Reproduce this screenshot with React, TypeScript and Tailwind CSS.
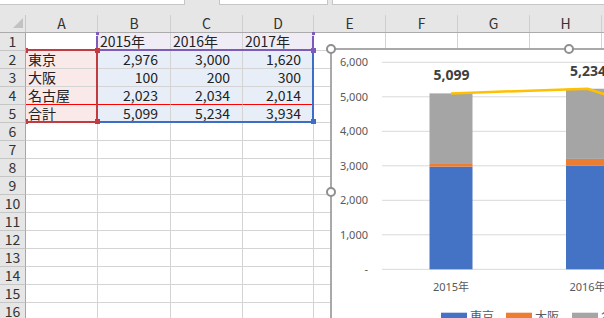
import React from "react";

const cols = [
  { l: "A", w: "w-[72px]" },
  { l: "B", w: "w-[73px]" },
  { l: "C", w: "w-[72px]" },
  { l: "D", w: "w-[71px]" },
  { l: "E", w: "w-[72px]" },
  { l: "F", w: "w-[72px]" },
  { l: "G", w: "w-[72px]" },
  { l: "H", w: "w-[72px]" },
  { l: "I", w: "w-[72px]" },
];

const data: string[][] = [
  ["", "2015年", "2016年", "2017年"],
  ["東京", "2,976", "3,000", "1,620"],
  ["大阪", "100", "200", "300"],
  ["名古屋", "2,023", "2,034", "2,014"],
  ["合計", "5,099", "5,234", "3,934"],
];

const rows = Array.from({ length: 16 }, (_, i) => i + 1);

function cellClass(r: number, c: number): string {
  let bg = "bg-white";
  if (r === 1 && c >= 1 && c <= 3) bg = "bg-[#efecf6]";
  if (r >= 2 && r <= 5 && c === 0) bg = "bg-[#fae9e9]";
  if (r >= 2 && r <= 5 && c >= 1 && c <= 3) bg = "bg-[#e7eef8]";
  const bb = r === 4 && c <= 3 ? "border-b-[#ff0000]" : "border-b-[#d4d4d4]";
  return `${bg} ${bb}`;
}

function Chart() {
  const y0 = 219.3;
  const k = 0.0345;
  const grid = [0, 1000, 2000, 3000, 4000, 5000, 6000];
  const labels = ["-", "1,000", "2,000", "3,000", "4,000", "5,000", "6,000"];
  const bars = [
    { x: 97.5, v: [2976, 100, 2023] },
    { x: 234, v: [3000, 200, 2034] },
  ];
  const colors = ["#4472c4", "#ed7d31", "#a5a5a5"];
  const cx = [119, 255.5, 392.5];
  const totals = [5099, 5234, 3934];
  return (
    <svg width="300" height="300" className="absolute left-0 top-0 overflow-visible">
      {grid.map((g, i) => (
        <g key={g}>
          <line x1={50} x2={300} y1={y0 - g * k} y2={y0 - g * k} stroke="#d9d9d9" strokeWidth={1} />
          <text
            x={36}
            y={y0 - g * k + 4}
            textAnchor="end"
            fontSize={11}
            fill="#595959"
            fontFamily="'Noto Sans', sans-serif"
          >
            {labels[i]}
          </text>
        </g>
      ))}
      {bars.map((b, bi) => {
        let acc = 0;
        return (
          <g key={bi}>
            {b.v.map((v, i) => {
              const yTop = y0 - (acc + v) * k;
              const h = v * k;
              acc += v;
              return <rect key={i} x={b.x} y={yTop} width={43} height={h} fill={colors[i]} />;
            })}
          </g>
        );
      })}
      <polyline
        points={totals.map((t, i) => `${cx[i]},${y0 - t * k}`).join(" ")}
        fill="none"
        stroke="#ffc000"
        strokeWidth={2.5}
        strokeLinejoin="round"
      />
      <text x={119.5} y={30} textAnchor="middle" fontSize={14} fontWeight={700} fill="#404040" fontFamily="'Noto Sans', sans-serif">
        5,099
      </text>
      <text x={256} y={25.5} textAnchor="middle" fontSize={14} fontWeight={700} fill="#404040" fontFamily="'Noto Sans', sans-serif">
        5,234
      </text>
      <text x={119} y={241} textAnchor="middle" fontSize={11} fill="#595959" fontFamily="'Noto Sans', 'Noto Sans CJK JP', sans-serif">
        2015年
      </text>
      <text x={255.5} y={241} textAnchor="middle" fontSize={11} fill="#595959" fontFamily="'Noto Sans', 'Noto Sans CJK JP', sans-serif">
        2016年
      </text>
      <rect x={109} y={262.7} width={26} height={8} fill="#4472c4" />
      <text x={138} y={271} fontSize={12} fill="#595959" fontFamily="'Noto Sans CJK JP', sans-serif">
        東京
      </text>
      <rect x={174} y={262.7} width={26} height={8} fill="#ed7d31" />
      <text x={203} y={271} fontSize={12} fill="#595959" fontFamily="'Noto Sans CJK JP', sans-serif">
        大阪
      </text>
      <rect x={240} y={262.7} width={26} height={8} fill="#a5a5a5" />
      <text x={269} y={271} fontSize={12} fill="#595959" fontFamily="'Noto Sans CJK JP', sans-serif">
        名古屋
      </text>
    </svg>
  );
}

export default function App() {
  return (
    <div
      className="relative w-[604px] h-[318px] overflow-hidden bg-white text-[14px] text-[#222]"
      style={{ fontFamily: "'Noto Sans CJK JP', 'Liberation Sans', sans-serif" }}
    >
      {/* top strip */}
      <div className="flex h-[5px] bg-[#e6e6e6]">
        <div className="w-[185px] bg-white border-b border-r border-[#c6c6c6]" />
        <div className="w-[34px]" />
        <div className="w-[109px] bg-white border-b border-x border-[#c6c6c6]" />
        <div className="w-[4px]" />
        <div className="flex-1 bg-white border-b border-l border-[#c6c6c6]" />
      </div>
      {/* column header */}
      <div className="flex h-[28px] bg-[#e6e6e6] border-b border-[#ababab]">
        <div className="relative w-[26px] shrink-0 border-r border-[#c8c8c8] mt-[10px]">
          <div className="absolute left-[13px] top-[3px] w-0 h-0 border-l-[10px] border-l-transparent border-b-[10px] border-b-[#c2c2c2]" />
        </div>
        {cols.map((c) => (
          <div
            key={c.l}
            className={`${c.w} shrink-0 mt-[10px] border-r border-[#cfcfcf] flex items-center justify-center leading-[17px] text-[#333]`}
          >
            {c.l}
          </div>
        ))}
      </div>
      {/* rows */}
      {rows.map((r) => (
        <div key={r} className="flex h-[18px]">
          <div className="w-[26px] shrink-0 bg-[#e6e6e6] border-r border-r-[#a6a6a6] border-b border-b-[#c6c6c6] flex items-center justify-center leading-[17px] text-[#333]">
            {r}
          </div>
          {cols.map((c, ci) => {
            const v = r <= 5 && ci <= 3 ? data[r - 1][ci] : "";
            const isNum = r >= 2 && ci >= 1 && ci <= 3;
            return (
              <div
                key={c.l}
                className={`${c.w} shrink-0 border-r border-r-[#d4d4d4] border-b ${cellClass(r, ci)} leading-[17px] whitespace-nowrap overflow-hidden ${
                  isNum ? "text-right pr-[12px]" : "pl-[2px]"
                }`}
              >
                {v}
              </div>
            );
          })}
        </div>
      ))}

      {/* purple range B1:D1 */}
      <div className="absolute left-[96px] top-[32px] w-[3px] h-[3px] bg-[#7d5bb8]" />
      <div className="absolute left-[96px] top-[36px] w-[2px] h-[12px] bg-[#7d5bb8]" />
      <div className="absolute left-[98px] top-[49px] w-[215px] h-[2px] bg-[#7d5bb8]" />
      <div className="absolute left-[312px] top-[32px] w-[3px] h-[3px] bg-[#7d5bb8]" />
      <div className="absolute left-[312px] top-[36px] w-[2px] h-[12px] bg-[#7d5bb8]" />
      <div className="absolute left-[311px] top-[48px] w-[5px] h-[5px] bg-[#7d5bb8]" />

      {/* blue range B2:D5 */}
      <div className="absolute left-[100px] top-[121px] w-[212px] h-[2px] bg-[#3d6dc5]" />
      <div className="absolute left-[312px] top-[53px] w-[2px] h-[67px] bg-[#3d6dc5]" />
      <div className="absolute left-[311px] top-[119px] w-[5px] h-[5px] bg-[#3d6dc5]" />

      {/* red range A2:A5 */}
      <div className="absolute left-[26px] top-[49px] w-[70px] h-[2px] bg-[#c23b40]" />
      <div className="absolute left-[96px] top-[49px] w-[2px] h-[73px] bg-[#c23b40]" />
      <div className="absolute left-[26px] top-[121px] w-[70px] h-[2px] bg-[#c23b40]" />
      <div className="absolute left-[95px] top-[48px] w-[5px] h-[5px] bg-[#c23b40]" />
      <div className="absolute left-[95px] top-[119px] w-[5px] h-[5px] bg-[#c23b40]" />
      <div className="absolute left-[26px] top-[48px] w-[2px] h-[5px] bg-[#c23b40]" />
      <div className="absolute left-[26px] top-[119px] w-[2px] h-[5px] bg-[#c23b40]" />

      {/* chart */}
      <div className="absolute left-[330px] top-[48px] w-[300px] h-[300px] bg-white border-l-2 border-t-2 border-[#a9a9a9]">
        <Chart />
      </div>
      <div className="absolute left-[326px] top-[44px] w-[10px] h-[10px] rounded-full bg-white border-2 border-[#8f8f8f]" />
      <div className="absolute left-[564px] top-[44px] w-[10px] h-[10px] rounded-full bg-white border-2 border-[#8f8f8f]" />
      <div className="absolute left-[326px] top-[187px] w-[10px] h-[10px] rounded-full bg-white border-2 border-[#8f8f8f]" />
    </div>
  );
}
